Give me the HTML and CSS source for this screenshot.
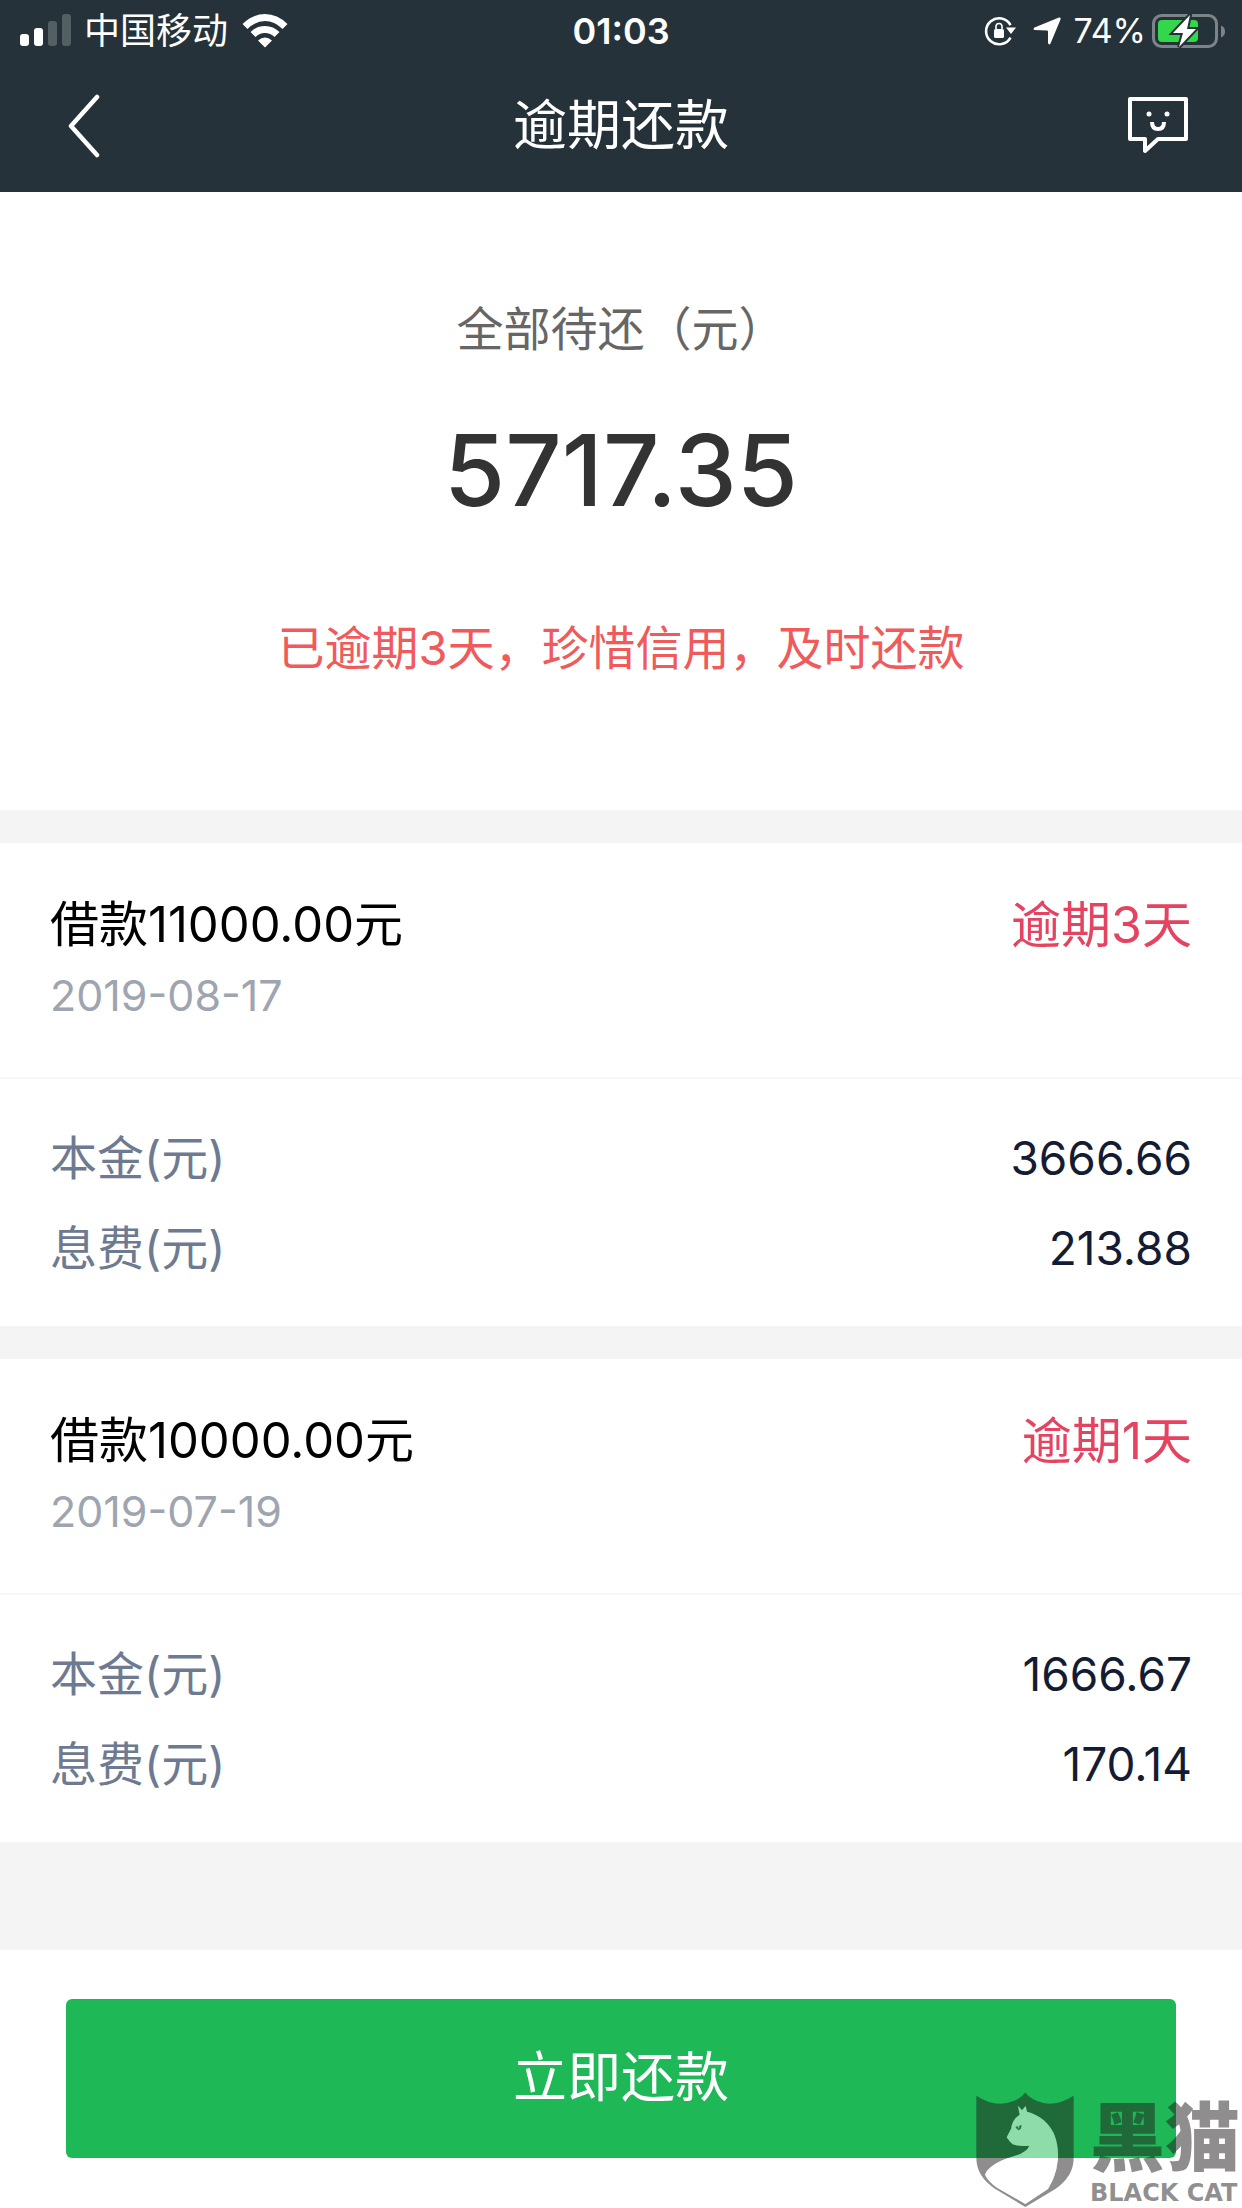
FILE: index.html
```html
<!DOCTYPE html>
<html lang="zh-CN">
<head>
    <meta charset="UTF-8">
    <meta name="viewport" content="width=device-width, initial-scale=1.0">
    <title>逾期还款</title>
    <link rel="stylesheet" href="styles.css">
</head>
<body>
    <div class="page">
        <header class="header">
            <div class="status-bar">
                <div class="status-left">
                    <svg width="52" height="34" viewBox="0 0 52 34" fill="#fff">
                        <rect x="0" y="20" width="9" height="12" rx="3"/>
                        <rect x="14" y="14" width="9" height="18" rx="3"/>
                        <rect x="28" y="7" width="9" height="25" rx="3" opacity=".22"/>
                        <rect x="42" y="0" width="9" height="32" rx="3" opacity=".22"/>
                    </svg>
                    <span class="carrier">中国移动</span>
                    <svg width="46" height="34" viewBox="0 0 46 34" fill="none" stroke="#fff" stroke-width="7">
                        <path d="M3 12.5Q12 3.5 23 3.5Q34 3.5 43 12.5"/>
                        <path d="M11 20.5Q16 15.5 23 15.5Q30 15.5 35 20.5"/>
                        <path d="M16 26.5Q23 20.5 30 26.5L23 33.5Z" fill="#fff" stroke="none"/>
                    </svg>
                </div>
                <div class="status-time">01:03</div>
                <div class="status-right">
                    <svg width="34" height="32" viewBox="0 0 34 32">
                        <path d="M27.5 22.5A13 13 0 1 1 27.5 10" fill="none" stroke="#fff" stroke-width="2.6"/>
                        <path d="M23 12.5H33L28 19Z" fill="#fff"/>
                        <rect x="11" y="14" width="10" height="9" rx="1.5" fill="#fff"/>
                        <path d="M13 14V11.500a3 3 0 0 1 6 0V14" fill="none" stroke="#fff" stroke-width="1.6"/>
                    </svg>
                    <svg class="icon-location" width="28" height="28" viewBox="0 0 28 28" fill="#fff">
                        <path d="M26 .5Q28 0 27.5 2.5L17.5 26.5Q16 28.5 15 26V14.5Q15 13.5 14 13.5L1.5 13Q-.5 12 1.5 10.5Z"/>
                    </svg>
                    <span class="percent">74%</span>
                    <svg width="74" height="34" viewBox="0 0 74 34">
                        <rect x="1.5" y="1.5" width="63" height="31" rx="8" fill="none" stroke="#7c8488" stroke-width="3"/>
                        <path d="M69 11.5Q73 13 73 17.5Q73 22 69 23.5Z" fill="#7c8488"/>
                        <rect x="6" y="6" width="40" height="22" rx="4" fill="#32d74b"/>
                        <path d="M38 1L21 19H31L27 33L44 15H35Z" fill="#fff" stroke="#253239" stroke-width="4" paint-order="stroke"/>
                    </svg>
                </div>
            </div>
            <nav class="nav-bar">
                <button class="icon-button icon-button-left" type="button" aria-label="返回">
                    <svg width="32" height="64" viewBox="0 0 32 64" fill="none" stroke="#fff" stroke-width="4.5" stroke-linecap="round" stroke-linejoin="round">
                        <path d="M29 3L3 32L29 61"/>
                    </svg>
                </button>
                <h1 class="nav-title">逾期还款</h1>
                <button class="icon-button icon-button-right" type="button" aria-label="客服">
                    <svg width="60" height="58" viewBox="0 0 60 58" fill="none" stroke="#fff" stroke-width="4">
                        <path d="M2 2H58V42H30L17 54V42H2Z" stroke-linejoin="round"/>
                        <path d="M24 25Q24 32 30 32Q36 32 36 25"/>
                        <circle cx="21" cy="17" r="2.5" fill="#fff" stroke="none"/>
                        <circle cx="39" cy="17" r="2.5" fill="#fff" stroke="none"/>
                    </svg>
                </button>
            </nav>
        </header>

        <main class="content">
            <section class="summary">
                <div class="summary-label">全部待还（元）</div>
                <div class="summary-amount">5717.35</div>
                <div class="summary-notice">已逾期3天，珍惜信用，及时还款</div>
            </section>

            <section class="loan">
                <div class="loan-head">
                    <div>
                        <h2 class="loan-title">借款11000.00元</h2>
                        <div class="loan-date">2019-08-17</div>
                    </div>
                    <div class="loan-overdue">逾期3天</div>
                </div>
                <dl class="loan-detail">
                    <div class="loan-row"><dt>本金(元)</dt><dd>3666.66</dd></div>
                    <div class="loan-row"><dt>息费(元)</dt><dd>213.88</dd></div>
                </dl>
            </section>

            <section class="loan">
                <div class="loan-head">
                    <div>
                        <h2 class="loan-title">借款10000.00元</h2>
                        <div class="loan-date">2019-07-19</div>
                    </div>
                    <div class="loan-overdue">逾期1天</div>
                </div>
                <dl class="loan-detail">
                    <div class="loan-row"><dt>本金(元)</dt><dd>1666.67</dd></div>
                    <div class="loan-row"><dt>息费(元)</dt><dd>170.14</dd></div>
                </dl>
            </section>
        </main>

        <footer class="footer">
            <button class="pay-button" type="button">立即还款</button>
        </footer>

        <div class="watermark">
            <svg width="98" height="116" viewBox="92 97 294 348">
                <path fill="#232020" fill-opacity=".51" fill-rule="evenodd" d="M93 108Q150 146 205 124Q230 114 240 98Q250 114 275 124Q325 146 385 108V295Q385 350 330 388L240 442L150 388Q93 350 93 295Z M218 138L230 152L241 139L245 156Q300 170 326 222Q342 262 337 305Q332 350 308 388L240 433L155 384Q128 365 119 345Q130 315 195 293Q244 280 252 258Q225 262 202 254L194 246L184 233L198 206Q200 180 223 165Z"/>
                <path fill="#fff" fill-opacity=".5" d="M218 138L230 152L241 139L245 156Q300 170 326 222Q342 262 337 305Q332 350 308 388L240 433L155 384Q128 365 119 345Q130 315 195 293Q244 280 252 258Q225 262 202 254L194 246L184 233L198 206Q200 180 223 165Z"/>
                <path fill="#1f7a3c" d="M210 202L228 196Q230 208 220 212Q214 208 210 202Z"/>
                <path fill="#8edba9" d="M217 199L222 197L221 208Z"/>
            </svg>
            <div class="watermark-text">
                <span class="watermark-name">黑猫</span>
                <span class="watermark-sub">BLACK CAT</span>
            </div>
        </div>
    </div>
</body>
</html>
```

FILE: styles.css
```css
* {
    box-sizing: border-box;
}
body {
    margin: 0;
    font-family: Inter, "Noto Sans CJK SC", sans-serif;
    background-color: #f4f4f4;
    color: #000;
}
h1, h2, dl, dd {
    margin: 0;
    font-weight: 400;
}
svg {
    display: block;
    flex: none;
}
button {
    border: none;
    font-family: inherit;
    cursor: pointer;
}
.page {
    position: relative;
    display: flex;
    flex-direction: column;
    min-height: 100vh;
}

/* header */
.header {
    background-color: #253239;
    color: #fff;
}
.status-bar {
    display: grid;
    grid-template-columns: 1fr auto 1fr;
    align-items: center;
    height: 60px;
    padding: 0 16px;
    font-size: 36px;
    line-height: 62px;
}
.status-left,
.status-right {
    display: flex;
    align-items: center;
}
.status-left {
    padding-left: 4px;
}
.status-right {
    justify-content: flex-end;
}
.status-time {
    font-weight: 600;
}
.carrier {
    margin: 0 14px 0 12px;
}
.icon-location {
    margin: 0 12px 0 16px;
}
.percent {
    margin-right: 6px;
    font-size: 34px;
}
.nav-bar {
    display: grid;
    grid-template-columns: 1fr auto 1fr;
    align-items: center;
    height: 132px;
    padding: 0 54px;
}
.icon-button {
    padding: 0;
    background: none;
}
.icon-button-left {
    justify-self: start;
    padding-left: 14px;
}
.icon-button-right {
    justify-self: end;
}
.nav-title {
    font-size: 54px;
    line-height: 80px;
}

/* total */
.summary {
    padding: 104px 50px 129px;
    background-color: #fff;
    text-align: center;
}
.summary-label,
.summary-notice {
    font-size: 47px;
    line-height: 66px;
}
.summary-label {
    color: #666;
}
.summary-amount {
    margin: 50px 0 87px;
    font-size: 99px;
    font-weight: 500;
    line-height: 116px;
    color: #333;
}
.summary-notice {
    color: #f15a5a;
}

/* loans */
.loan {
    margin-top: 33px;
    background-color: #fff;
}
.loan-head {
    display: flex;
    justify-content: space-between;
    padding: 52px 50px 54px;
    border-bottom: 2px solid #f8f8f8;
}
.loan-title,
.loan-overdue {
    font-size: 50px;
    line-height: 60px;
}
.loan-title {
    font-size: 49px;
}
.loan-overdue {
    color: #e64360;
}
.loan-date {
    margin-top: 12px;
    font-size: 43px;
    line-height: 56px;
    color: #9ea5b0;
}
.loan-detail {
    padding: 34px 50px 33px;
}
.loan-row {
    display: flex;
    justify-content: space-between;
    font-size: 47px;
    line-height: 90px;
    color: #6e7a91;
}
.loan-row dd {
    font-size: 46px;
    color: #141c33;
}

/* pay */
.footer {
    flex: 1;
    margin-top: 108px;
    padding: 49px 66px 50px;
    background-color: #fff;
}
.pay-button {
    display: block;
    width: 100%;
    padding: 39px 0 40px;
    border-radius: 6px;
    background-color: #1eb857;
    color: #fff;
    font-size: 54px;
    line-height: 80px;
}

.watermark {
    position: absolute;
    right: 2px;
    bottom: 0;
    display: flex;
    align-items: flex-end;
    gap: 16px;
    color: rgba(35, 32, 32, .51);
    pointer-events: none;
}
.watermark-text {
    display: flex;
    flex-direction: column;
}
.watermark-name {
    font-size: 75px;
    font-weight: 900;
    line-height: 80px;
}
.watermark-sub {
    font-family: "DejaVu Sans", sans-serif;
    font-size: 24px;
    font-weight: 700;
    line-height: 30px;
}
```
